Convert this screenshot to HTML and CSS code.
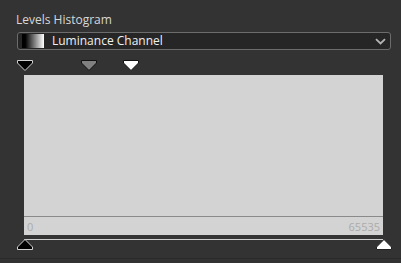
FILE: index.html
```html
<!DOCTYPE html>
<html>
<head>
<meta charset="utf-8">
<link rel="stylesheet" href="styles.css">
</head>
<body>
<div class="panel">
  <div class="title">Levels Histogram</div>
  <div class="select">
    <span class="swatch"></span>
    <span class="label">Luminance Channel</span>
    <svg class="chev" width="11" height="7" viewBox="0 0 11 7"><path d="M1 1.2 L5.5 5.5 L10 1.2" fill="none" stroke="#b4b4b4" stroke-width="1.8"/></svg>
  </div>
  <div class="track top">
    <svg class="handle" style="left:17px" width="16" height="11" viewBox="0 0 16 11"><polygon points="0.5,0.5 15.5,0.5 15.5,3 8,10.5 0.5,3" fill="#000" stroke="#d0d0d0"/></svg>
    <svg class="handle" style="left:81px" width="16" height="11" viewBox="0 0 16 11"><polygon points="0.5,0.5 15.5,0.5 15.5,3 8,10.5 0.5,3" fill="#808080" stroke="#111"/></svg>
    <svg class="handle" style="left:123px" width="16" height="11" viewBox="0 0 16 11"><polygon points="0.5,0.5 15.5,0.5 15.5,3 8,10.5 0.5,3" fill="#fff" stroke="#111"/></svg>
  </div>
  <div class="histo">
    <div class="plot"></div>
    <div class="axis"><span>0</span><span>65535</span></div>
  </div>
  <div class="track bottom">
    <div class="rail"></div>
    <svg class="handle" style="left:17px" width="16" height="11" viewBox="0 0 16 11"><polygon points="8,0.5 15.5,8 15.5,10.5 0.5,10.5 0.5,8" fill="#000" stroke="#d0d0d0"/></svg>
    <svg class="handle" style="left:376px" width="16" height="11" viewBox="0 0 16 11"><polygon points="8,0.5 15.5,8 15.5,10.5 0.5,10.5 0.5,8" fill="#fff" stroke="#222"/></svg>
  </div>
  <div class="sep"></div>
</div>
</body>
</html>
```
FILE: styles.css
```css
html, body {
  margin: 0;
  padding: 0;
  background: #333333;
  width: 401px;
  height: 263px;
  overflow: hidden;
}
.panel {
  font-family: "Open Sans", "Noto Sans", sans-serif;
  display: flex;
  flex-direction: column;
  height: 263px;
}
.title {
  color: #d8d8d8;
  font-size: 12px;
  line-height: 16px;
  margin: 12px 0 0 16px;
  height: 16px;
}
.select {
  margin: 4px 0 0 17px;
  width: 372px;
  height: 16px;
  border: 1px solid #6c6c6c;
  border-radius: 3px;
  background: #262626;
  display: flex;
  align-items: center;
}
.swatch {
  width: 22px;
  height: 14px;
  margin-left: 4px;
  background: linear-gradient(to right, #000 0%, #000 15%, #fff 100%);
}
.label {
  color: #f0f0f0;
  font-size: 12px;
  line-height: 16px;
  margin-left: 8px;
  flex: 1;
}
.chev {
  margin-right: 4px;
}
.track {
  position: relative;
  height: 11px;
}
.track.top {
  margin-top: 10px;
}
.handle {
  position: absolute;
  top: 0;
  display: block;
}
.histo {
  margin: 4px 0 0 24px;
  width: 359px;
  height: 160px;
  background: #d3d3d3;
  display: flex;
  flex-direction: column;
}
.plot {
  height: 141px;
  border-bottom: 1px solid #8a8a8a;
}
.axis {
  flex: 1;
  display: flex;
  justify-content: space-between;
  align-items: center;
  padding: 0 3px 0 3px;
  font-size: 11px;
  color: #ababab;
}
.track.bottom {
  margin-top: 4px;
  height: 11px;
}
.rail {
  position: absolute;
  left: 24px;
  width: 359px;
  top: 0;
  height: 1px;
  background: #cfcfcf;
}
.sep {
  margin-top: 8px;
  height: 1px;
  background: #2a2a2a;
}
```
